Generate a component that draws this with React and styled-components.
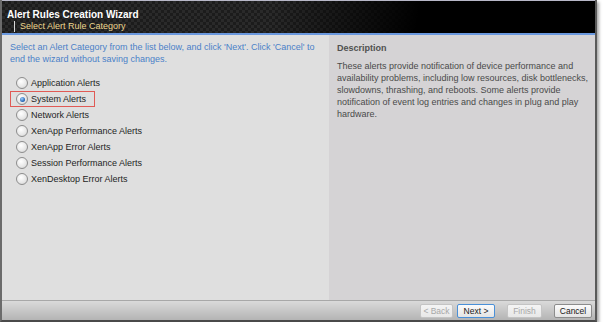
import React from "react";
import styled, { createGlobalStyle } from "styled-components";

const alerts = [
  "Application Alerts",
  "System Alerts",
  "Network Alerts",
  "XenApp Performance Alerts",
  "XenApp Error Alerts",
  "Session Performance Alerts",
  "XenDesktop Error Alerts",
];

export default function App() {
  const selected = "System Alerts";

  return (
    <>
      <GlobalStyle />
      <Window>
        <Header>
          <Title>Alert Rules Creation Wizard</Title>
          <SubTitle>Select Alert Rule Category</SubTitle>
        </Header>
        <Body>
          <LeftPane>
            <Intro>
              Select an Alert Category from the list below, and click 'Next'. Click 'Cancel' to
              end the wizard without saving changes.
            </Intro>
            <RadioList>
              {alerts.map((name) => (
                <RadioRow key={name} $highlight={name === selected}>
                  <Radio $checked={name === selected} />
                  <span>{name}</span>
                </RadioRow>
              ))}
            </RadioList>
          </LeftPane>
          <RightPane>
            <DescTitle>Description</DescTitle>
            <DescText>
              These alerts provide notification of device performance and
              availability problems, including low resources, disk bottlenecks,
              slowdowns, thrashing, and reboots. Some alerts provide
              notification of event log entries and changes in plug and play
              hardware.
            </DescText>
          </RightPane>
        </Body>
        <Footer>
          <Button $w={33} disabled>&lt; Back</Button>
          <Button $w={38} $primary>Next &gt;</Button>
          <Button $w={35} disabled $gap={12}>Finish</Button>
          <Button $w={38} $gap={12}>Cancel</Button>
        </Footer>
      </Window>
    </>
  );
}

// Styled Components
const GlobalStyle = createGlobalStyle`
  body {
    margin: 0;
    background: #ffffff;
    font-family: "Liberation Sans", Arial, sans-serif;
  }
`;

const Window = styled.div`
  width: 597px;
  height: 322px;
  display: flex;
  flex-direction: column;
  box-sizing: border-box;
  border-left: 2px solid #6b6b6b;
  border-right: 2px solid #5a5a5a;
  border-bottom: 2px solid #4a4a4a;
  box-shadow: 2px 2px 3px rgba(0, 0, 0, 0.35);
`;

const Header = styled.div`
  height: 35px;
  box-sizing: border-box;
  padding: 8px 0 0 5px;
  border-top: 1px solid #b8b8c8;
  border-bottom: 2px solid #6a98de;
  background:
    linear-gradient(100deg, rgba(0, 0, 0, 0) 0%, rgba(0, 0, 0, 0) 45%, #000 70%),
    repeating-conic-gradient(#2a2a2a 0% 25%, #1c1c1c 0% 50%) 0 0 / 6px 6px;
  background-color: #000;
`;

const Title = styled.div`
  color: #ffffff;
  font-weight: bold;
  font-size: 10px;
  line-height: 12px;
`;

const SubTitle = styled.div`
  margin: 0 0 0 7px;
  padding-left: 5px;
  border-left: 1px solid #d8d8d8;
  color: #ecd68e;
  font-size: 9px;
  line-height: 11px;
`;

const Body = styled.div`
  flex: 1;
  display: flex;
`;

const LeftPane = styled.div`
  width: 329px;
  background: #dfdfdf;
  padding: 6px 0 0 8px;
  box-sizing: border-box;
`;

const Intro = styled.div`
  color: #4b7fc8;
  font-size: 9px;
  line-height: 12px;
  width: 318px;
`;

const RadioList = styled.div`
  display: flex;
  flex-direction: column;
  margin-top: 10px;
`;

const RadioRow = styled.label`
  display: flex;
  align-items: center;
  gap: 3px;
  height: 16px;
  width: fit-content;
  padding: 0 8px 0 5px;
  box-sizing: border-box;
  color: #1e1e1e;
  font-size: 9px;
  border: 1px solid ${(p) => (p.$highlight ? "#e05a55" : "transparent")};
`;

const Radio = styled.span`
  width: 10px;
  height: 10px;
  border-radius: 50%;
  border: 1px solid #8d8d8d;
  background: radial-gradient(circle at 40% 35%, #ffffff 0%, #e6e6e6 60%, #c8c8c8 100%);
  display: flex;
  align-items: center;
  justify-content: center;

  &::after {
    content: "";
    width: 5px;
    height: 5px;
    border-radius: 50%;
    background: ${(p) =>
      p.$checked ? "radial-gradient(circle at 40% 35%, #9fd0ff, #1e5fb0 70%)" : "transparent"};
  }
`;

const RightPane = styled.div`
  flex: 1;
  background: #d5d3d5;
  padding: 7px 0 0 8px;
  box-sizing: border-box;
`;

const DescTitle = styled.div`
  color: #505050;
  font-weight: bold;
  font-size: 9px;
  line-height: 12px;
`;

const DescText = styled.div`
  margin-top: 6px;
  color: #4a4a4a;
  font-size: 9px;
  line-height: 12px;
  width: 258px;
`;

const Footer = styled.div`
  height: 20px;
  display: flex;
  align-items: center;
  justify-content: flex-end;
  padding: 0 3px 0 0;
  border-top: 1px solid #a8a8a8;
  background: linear-gradient(#dadada, #b4b4b4);
  box-sizing: border-box;
`;

const Button = styled.button`
  width: ${(p) => p.$w}px;
  height: 14px;
  margin-left: ${(p) => p.$gap || 4}px;
  padding: 0;
  font-family: "Liberation Sans", Arial, sans-serif;
  font-size: 8.5px;
  color: #1a1a1a;
  border-radius: 2px;
  border: 1px solid ${(p) => (p.$primary ? "#4a90d8" : "#8c8c8c")};
  background: linear-gradient(#fbfbfb, #e4e4e4);

  &:disabled {
    color: #a8a8a8;
    border-color: #c4c4c4;
    background: linear-gradient(#f4f4f4, #e8e8e8);
  }
`;
